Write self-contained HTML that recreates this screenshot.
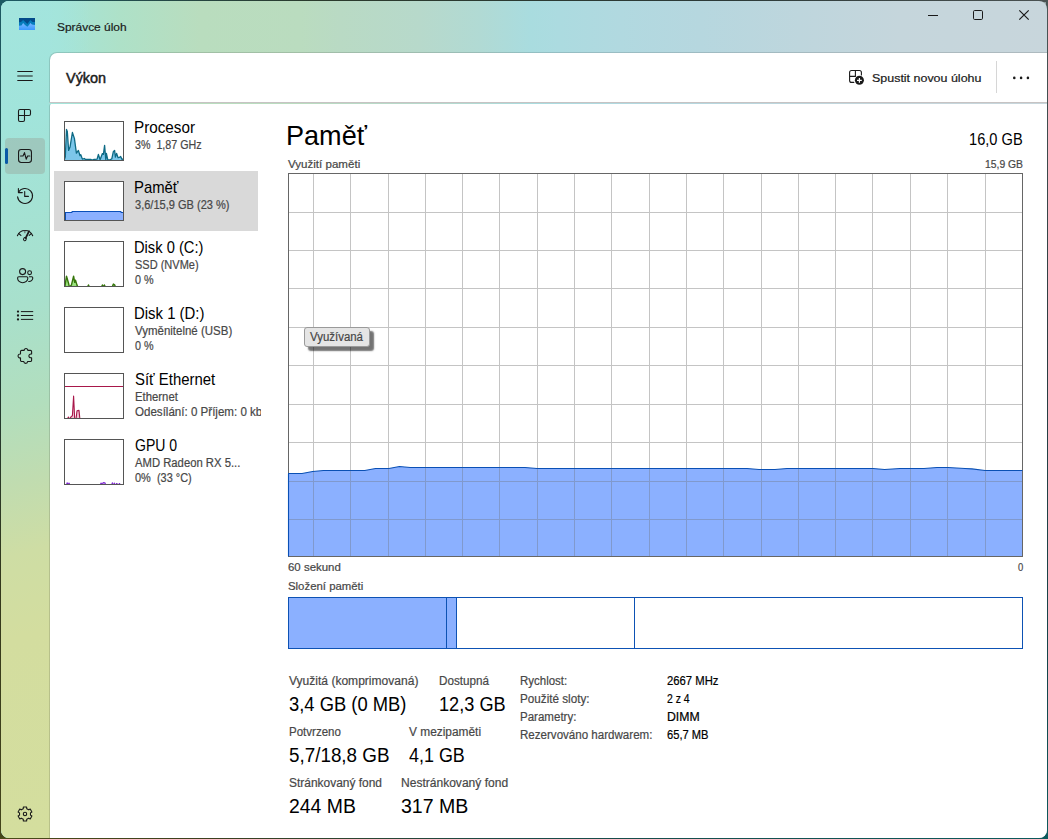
<!DOCTYPE html>
<html lang="cs">
<head>
<meta charset="utf-8">
<title>Správce úloh</title>
<style>
html,body{margin:0;padding:0}
body{width:1048px;height:839px;overflow:hidden;position:relative;font-family:"Liberation Sans",sans-serif;
background:linear-gradient(180deg,#1d5a64 0,#1a3a3a 35%,#33381c 70%,#44441a 100%)}
.corner-tr{position:absolute;left:1036px;top:0;width:12px;height:12px;background:#8e9c9c}
.corner-br{position:absolute;left:1036px;top:827px;width:12px;height:12px;background:#0c5a5c}
.edge-top{position:absolute;left:0;top:0;width:1048px;height:2px;background:linear-gradient(90deg,#1d5a64,#2a3a2c 30%,#2c3a38 70%,#4a5252)}
.edge-right{position:absolute;left:1046px;top:0;width:2px;height:839px;background:linear-gradient(180deg,#4a5555,#2c3c40 40%,#13444a 80%,#0c5a5c)}
.edge-bottom{position:absolute;left:0;top:837px;width:1048px;height:2px;background:linear-gradient(90deg,#4a4a18,#3c4020 20%,#1a4a48 50%,#0c5a5c)}
.win{position:absolute;left:1px;top:1px;width:1046px;height:837px;border-radius:8px;overflow:hidden}
.o{position:absolute;left:-1px;top:-1px;width:1048px;height:839px;
background:
 linear-gradient(90deg,rgba(163,229,222,1) 0,rgba(163,229,222,1) 30px,rgba(163,229,222,0) 90px),
 linear-gradient(90deg,#a3e5de 0,#a5e4d8 60px,#aee1c8 120px,#b9ddbe 200px,#badcbf 300px,#b9dac4 340px,#b7d9cb 420px,#b1dad4 480px,#a9dcdf 530px,#acdbe0 560px,#b1d9e0 620px,#b6d7df 700px,#bed6dd 800px,#c5d6dc 900px,#c8d6dc 100%)}
.side{position:absolute;left:0;top:0;width:50px;height:839px;
background:linear-gradient(165deg,#a3e5de 0,#a1e4db 120px,#a8e0cc 300px,#b2debd 400px,#c0dcb0 470px,#cedda4 540px,#d3dd9f 620px,#d4de9e 100%)}
.hdr{position:absolute;left:49px;top:52px;width:999px;height:49px;background:#fff;border-top-left-radius:8px;border:1px solid rgba(0,0,0,.13);border-bottom-color:#c7c3c3;border-right:0;background-clip:padding-box}
.content{position:absolute;left:49px;top:104px;width:999px;height:735px;background:#fff;border-top-left-radius:2px;border-left:1px solid rgba(0,0,0,.13);background-clip:padding-box}
.t{position:absolute;white-space:nowrap;line-height:1;transform-origin:0 0}
.sel{position:absolute;left:54px;top:171px;width:204px;height:60px;background:#d9d9d9}
.thumb{position:absolute;left:64px;width:58px;border:1px solid #555;background:#fff;overflow:hidden}
.thumb svg{position:absolute;left:0;top:0}
.navsel{position:absolute;left:5px;top:138px;width:40px;height:36px;border-radius:4px;background:rgba(150,140,130,.3)}
.navind{position:absolute;left:5px;top:148px;width:3px;height:16px;border-radius:1.5px;background:#0a59a6}
.tip{position:absolute;left:304px;top:327px;width:64px;height:18px;border:1px solid #9a9a9a;border-radius:3px;background:#e5e5e5;box-shadow:4px 4px 1.5px rgba(0,0,0,.55)}
.vsep{position:absolute;left:996px;top:61px;width:1px;height:32px;background:#d6d6d6}
.comp{position:absolute;left:288px;top:597px;width:733px;height:50px;border:1px solid #0d52b4;background:#fff}
.comp i{position:absolute;top:0;height:50px;display:block}
.clip{position:absolute;left:0;top:0;width:261px;height:839px;overflow:hidden}
.ic{position:absolute;overflow:visible}
</style>
</head>
<body>
<div class="corner-tr"></div><div class="corner-br"></div><div class="edge-top"></div><div class="edge-right"></div><div class="edge-bottom"></div>
<div class="win"><div class="o">
<div class="side"></div>
<div class="hdr"></div>
<div class="content"></div>
<header>
<svg class="ic" style="left:19px;top:18px" width="16" height="12" viewBox="19 18 16 12" ><defs><linearGradient id="ag" x1="0" y1="0" x2="0" y2="1"><stop offset="0" stop-color="#78b8ff"/><stop offset="1" stop-color="#3a99ff"/></linearGradient></defs><rect x="19" y="18" width="16" height="12" fill="#034b8a"/><path d="M19 22.3L21 22L23.1 20.1L25 21.8L27.4 23.9L29 21.8L30.3 20.1L32.5 22L35 22V30H19Z" fill="#057cbc"/><path d="M19 25.7L21.5 25.5L23.1 23.1L25 25L27.4 26.8L29 25L30.3 23.1L32 24.6L35 24.9V30H19Z" fill="url(#ag)"/></svg>
<svg class="ic" style="left:920px;top:5px" width="120" height="22" viewBox="920 5 120 22" ><path d="M928 15.5H938" stroke="#1a1a1a" stroke-width="1" fill="none"/><rect x="973.5" y="10.5" width="9" height="9" rx="1.2" stroke="#1a1a1a" stroke-width="1" fill="none"/><path d="M1019.3 10.3L1028.7 19.7M1028.7 10.3L1019.3 19.7" stroke="#1a1a1a" stroke-width="1.2" fill="none"/></svg>
<span class="t" style="left:57.10px;top:22px;font-size:11.3px;color:#1b1b1b;-webkit-text-stroke:0.2px;transform:scaleX(1.0555);">Správce úloh</span>
<div class="vsep"></div>
<span class="t" style="left:66.00px;top:71px;font-size:14px;color:#1b1b1b;-webkit-text-stroke:0.45px;transform:scaleX(1.0308);">Výkon</span>
<svg class="ic" style="left:846px;top:68px" width="20" height="18" viewBox="846 68 20 18" ><path d="M861.4 74.9V72.5a2 2 0 0 0-2-2H851.6a2 2 0 0 0-2 2V80.4a2 2 0 0 0 2 2H853.8M855.4 70.5V76.4H849.6" stroke="#1a1a1a" stroke-width="1.1" fill="none" stroke-linecap="round" stroke-linejoin="round"/><circle cx="859.4" cy="80.3" r="4.5" fill="#1a1a1a"/><path d="M857 80.3H861.8M859.4 77.9V82.7" stroke="#fff" stroke-width="1.2" fill="none"/></svg>
<span class="t" style="left:872.10px;top:73px;font-size:11.3px;color:#1b1b1b;-webkit-text-stroke:0.2px;transform:scaleX(1.1026);">Spustit novou úlohu</span>
<svg class="ic" style="left:1010px;top:74px" width="24" height="8" viewBox="1010 74 24 8" ><circle cx="1014.3" cy="77.9" r="1.3" fill="#1a1a1a"/><circle cx="1021.1" cy="77.9" r="1.3" fill="#1a1a1a"/><circle cx="1027.9" cy="77.9" r="1.3" fill="#1a1a1a"/></svg>
</header>
<nav>
<div class="navsel"></div><div class="navind"></div>
<svg class="ic" style="left:15px;top:68px" width="20" height="16" viewBox="15 68 20 16" ><path d="M17.3 71.5H32.7M17.3 76H32.7M17.3 80.5H32.7" stroke="#1a1a1a" stroke-width="1" fill="none"/></svg>
<svg class="ic" style="left:16px;top:107px" width="18" height="18" viewBox="16 107 18 18" ><path d="M18.5 111a1.5 1.5 0 0 1 1.5-1.5H29a1.5 1.5 0 0 1 1.5 1.5V114a1.5 1.5 0 0 1-1.5 1.5H24.5V120a1.5 1.5 0 0 1-1.5 1.5H20a1.5 1.5 0 0 1-1.5-1.5ZM24.5 109.5V115.5M18.5 115.5H24.5" stroke="#1a1a1a" stroke-width="1.1" fill="none"/></svg>
<svg class="ic" style="left:16px;top:147px" width="18" height="18" viewBox="16 147 18 18" ><rect x="18.55" y="149.55" width="12.9" height="12.9" rx="2.6" stroke="#1a1a1a" stroke-width="1.1" fill="none"/><path d="M20.5 156H23L24.5 152.6L26.2 159.2L27.6 156H29.8" stroke="#1a1a1a" stroke-width="1.1" fill="none" stroke-linejoin="round" stroke-linecap="round"/></svg>
<svg class="ic" style="left:15px;top:186px" width="20" height="20" viewBox="15 186 20 20" ><path d="M18.5 192.3A7.5 7.5 0 1 1 17.6 196.9" stroke="#1a1a1a" stroke-width="1.1" fill="none" stroke-linecap="round"/><path d="M18.4 188.5V192.6H22.3" stroke="#1a1a1a" stroke-width="1.1" fill="none" stroke-linecap="round" stroke-linejoin="round"/><path d="M24.7 191.6V196.4H28.4" stroke="#1a1a1a" stroke-width="1.1" fill="none" stroke-linecap="round" stroke-linejoin="round"/></svg>
<svg class="ic" style="left:15px;top:227px" width="20" height="16" viewBox="15 227 20 16" ><path d="M17.4 235.7A8.2 8.2 0 0 1 32.7 235.7" stroke="#1a1a1a" stroke-width="1.1" fill="none" stroke-linecap="round"/><path d="M18.7 233.5L20.9 235.4M31.4 233.5L29.2 235.4" stroke="#1a1a1a" stroke-width="1.1" fill="none" stroke-linecap="round"/><path d="M24.9 230.6V233.2" stroke="#555" stroke-width="1" fill="none"/><path d="M29.1 231.2L25.7 238" stroke="#1a1a1a" stroke-width="1.7" fill="none" stroke-linecap="round"/><ellipse cx="24.9" cy="239.2" rx="1.3" ry="1.6" transform="rotate(28 24.9 239.2)" stroke="#1a1a1a" stroke-width="1" fill="none"/></svg>
<svg class="ic" style="left:15px;top:266px" width="20" height="19" viewBox="15 266 20 19" ><circle cx="22.6" cy="271.6" r="3" stroke="#1a1a1a" stroke-width="1.1" fill="none"/><circle cx="29.6" cy="272.7" r="1.9" stroke="#1a1a1a" stroke-width="1.1" fill="none"/><path d="M18.8 276.8H26.6a1.2 1.2 0 0 1 1.2 1.2V278.3A5.1 4.4 0 0 1 17.6 278.3V278a1.2 1.2 0 0 1 1.2-1.2Z" stroke="#1a1a1a" stroke-width="1.1" fill="none" stroke-linejoin="round"/><path d="M29.4 276.8H31.7a1.1 1.1 0 0 1 1.1 1.1V278.1A3.8 3.5 0 0 1 28.7 281.5" stroke="#1a1a1a" stroke-width="1.1" fill="none" stroke-linejoin="round" stroke-linecap="round"/></svg>
<svg class="ic" style="left:15px;top:308px" width="20" height="15" viewBox="15 308 20 15" ><path d="M21.3 311.6H32.8M21.3 315.5H32.8M21.3 319.4H32.8" stroke="#1a1a1a" stroke-width="1" fill="none" stroke-linecap="round"/><circle cx="18" cy="311.6" r="1.15" fill="#1a1a1a"/><circle cx="18" cy="315.5" r="1.15" fill="#1a1a1a"/><circle cx="18" cy="319.4" r="1.15" fill="#1a1a1a"/></svg>
<svg class="ic" style="left:16px;top:346px" width="18" height="20" viewBox="16 346 18 20" ><path d="M21.7 350.4H24.1A1.9 1.9 0 1 1 27.9 350.4H30.4a1.2 1.2 0 0 1 1.2 1.2V354H30.8A1.9 1.9 0 1 0 30.8 357.8H31.6V360.3a1.2 1.2 0 0 1-1.2 1.2H27.6A1.9 1.9 0 1 1 23.8 361.5H21.7a1.2 1.2 0 0 1-1.2-1.2V357.9A2 2 0 1 1 20.5 354V351.6a1.2 1.2 0 0 1 1.2-1.2Z" stroke="#1a1a1a" stroke-width="1.1" fill="none" stroke-linejoin="round"/></svg>
<svg class="ic" style="left:16px;top:805px" width="18" height="18" viewBox="16 805 18 18" ><path d="M23.36 806.99L26.64 806.99L26.73 808.67L28.75 809.84L30.25 809.07L31.89 811.92L30.48 812.84L30.48 815.16L31.89 816.08L30.25 818.93L28.75 818.16L26.73 819.33L26.64 821.01L23.36 821.01L23.27 819.33L21.25 818.16L19.75 818.93L18.11 816.08L19.52 815.16L19.52 812.84L18.11 811.92L19.75 809.07L21.25 809.84L23.27 808.67Z" stroke="#1a1a1a" stroke-width="1.1" fill="none" stroke-linejoin="round"/><circle cx="25" cy="814" r="1.7" stroke="#1a1a1a" stroke-width="1.1" fill="none"/></svg>
</nav>
<aside>
<div class="sel"></div>
<div class="thumb" style="top:121px;height:38px"><svg width="58" height="38" viewBox="0 0 58 38"><path d="M-0.7 37.8 L0.3 35.1 L1.5 7.4 L2.3 9.4 L3.6 28.4 L5.0 25.1 L7.4 10.5 L9.4 16.4 L11.4 31.1 L13.4 28.4 L15.0 33.7 L15.8 32.7 L17.4 37.1 L19.4 36.5 L20.4 37.4 L25.7 37.4 L27.1 38.1 L29.1 37.4 L32.1 37.2 L33.4 32.5 L35.1 37.8 L37.4 31.6 L38.4 32.4 L39.6 23.4 L40.8 37.8 L41.4 31.4 L42.8 37.8 L45.1 37.8 L46.8 36.8 L48.4 29.4 L49.6 28.4 L50.4 35.1 L51.6 31.4 L53.1 35.7 L54.5 35.4 L55.5 34.4 L57.1 37.4 L58.5 37.1 L58.5 38 L-0.7 38Z" fill="#7cc6ea"/><path d="M-0.7 37.8 L0.3 35.1 L1.5 7.4 L2.3 9.4 L3.6 28.4 L5.0 25.1 L7.4 10.5 L9.4 16.4 L11.4 31.1 L13.4 28.4 L15.0 33.7 L15.8 32.7 L17.4 37.1 L19.4 36.5 L20.4 37.4 L25.7 37.4 L27.1 38.1 L29.1 37.4 L32.1 37.2 L33.4 32.5 L35.1 37.8 L37.4 31.6 L38.4 32.4 L39.6 23.4 L40.8 37.8 L41.4 31.4 L42.8 37.8 L45.1 37.8 L46.8 36.8 L48.4 29.4 L49.6 28.4 L50.4 35.1 L51.6 31.4 L53.1 35.7 L54.5 35.4 L55.5 34.4 L57.1 37.4 L58.5 37.1" stroke="#0e6a85" stroke-width="1.3" fill="none" stroke-linejoin="round"/></svg></div>
<span class="t" style="left:134.03px;top:120px;font-size:15.7px;color:#000000;transform:scaleX(0.9716);">Procesor</span>
<span class="t" style="left:135.00px;top:139px;font-size:12px;color:#474747;-webkit-text-stroke:0.2px;transform:scaleX(0.8916);">3%  1,87 GHz</span>
<div class="thumb" style="top:181px;height:38px"><svg width="58" height="38" viewBox="0 0 58 38"><path d="M0.0 30.5 L6.5 30.5 L7.5 29.5 L55.5 29.5 L56.5 30.5 L58.0 30.5 L58.0 38 L0.0 38Z" fill="#8bb0ff"/><path d="M0.0 30.5 L6.5 30.5 L7.5 29.5 L55.5 29.5 L56.5 30.5 L58.0 30.5" stroke="#0a4fba" stroke-width="1.15" fill="none" stroke-linejoin="round"/><path d="M0.5 30.6V38" stroke="#0a50b5" stroke-width="1"/></svg></div>
<span class="t" style="left:134.05px;top:180px;font-size:15.7px;color:#000000;transform:scaleX(0.9472);">Paměť</span>
<span class="t" style="left:135.00px;top:199px;font-size:12px;color:#474747;-webkit-text-stroke:0.2px;transform:scaleX(0.9199);">3,6/15,9 GB (23 %)</span>
<div class="thumb" style="top:241px;height:44px"><svg width="58" height="44" viewBox="0 0 58 44"><path d="M-0.7 45.2 L-0.2 45.2 L1.5 34.1 L3.7 41.8 L4.4 45.2 L6.4 43.1 L8.6 34.1 L9.7 40.4 L10.5 38.1 L12.0 43.1 L13.0 45.2 L22.4 45.2 L23.5 43.0 L24.4 45.2 L36.4 45.2 L37.4 43.0 L38.4 45.2 L39.4 43.0 L40.4 45.2 L47.1 45.2 L48.4 42.1 L49.8 43.1 L50.4 45.2 L58.5 45.2 L58.5 44 L-0.7 44Z" fill="#9be27f"/><path d="M-0.7 45.2 L-0.2 45.2 L1.5 34.1 L3.7 41.8 L4.4 45.2 L6.4 43.1 L8.6 34.1 L9.7 40.4 L10.5 38.1 L12.0 43.1 L13.0 45.2 L22.4 45.2 L23.5 43.0 L24.4 45.2 L36.4 45.2 L37.4 43.0 L38.4 45.2 L39.4 43.0 L40.4 45.2 L47.1 45.2 L48.4 42.1 L49.8 43.1 L50.4 45.2 L58.5 45.2" stroke="#35750a" stroke-width="1.4" fill="none" stroke-linejoin="round"/></svg></div>
<span class="t" style="left:134.06px;top:240px;font-size:15.7px;color:#000000;transform:scaleX(0.9361);">Disk 0 (C:)</span>
<span class="t" style="left:135.00px;top:259px;font-size:12px;color:#474747;-webkit-text-stroke:0.2px;transform:scaleX(0.9172);">SSD (NVMe)</span>
<span class="t" style="left:135.00px;top:274px;font-size:12px;color:#474747;-webkit-text-stroke:0.2px;transform:scaleX(0.8997);">0 %</span>
<div class="thumb" style="top:307px;height:44px"><svg width="58" height="44" viewBox="0 0 58 44"></svg></div>
<span class="t" style="left:134.05px;top:306px;font-size:15.7px;color:#000000;transform:scaleX(0.9512);">Disk 1 (D:)</span>
<span class="t" style="left:135.00px;top:325px;font-size:12px;color:#474747;-webkit-text-stroke:0.2px;transform:scaleX(0.9568);">Vyměnitelné (USB)</span>
<span class="t" style="left:135.00px;top:340px;font-size:12px;color:#474747;-webkit-text-stroke:0.2px;transform:scaleX(0.8997);">0 %</span>
<div class="thumb" style="top:373px;height:44px"><svg width="58" height="44" viewBox="0 0 58 44"><path d="M-0.7 45.2 L2.3 45.2 L3.4 43.1 L4.4 45.2 L6.4 42.4 L7.4 41.8 L8.6 22.1 L9.7 45.2 L11.0 45.2 L12.0 36.8 L14.0 36.4 L14.9 45.2 L58.5 45.2 L58.5 44 L-0.7 44Z" fill="#f3c3d3"/><path d="M-0.7 45.2 L2.3 45.2 L3.4 43.1 L4.4 45.2 L6.4 42.4 L7.4 41.8 L8.6 22.1 L9.7 45.2 L11.0 45.2 L12.0 36.8 L14.0 36.4 L14.9 45.2 L58.5 45.2" stroke="#a8174a" stroke-width="1.1" fill="none" stroke-linejoin="round"/><path d="M0 12.5H58" stroke="#a8174a" stroke-width="1" shape-rendering="crispEdges"/></svg></div>
<span class="t" style="left:135.00px;top:372px;font-size:15.7px;color:#000000;transform:scaleX(0.9505);">Síť Ethernet</span>
<span class="t" style="left:135.00px;top:391px;font-size:12px;color:#474747;-webkit-text-stroke:0.2px;transform:scaleX(0.9451);">Ethernet</span>
<div class="clip"><span class="t" style="left:135.00px;top:406px;font-size:12px;color:#474747;-webkit-text-stroke:0.2px;transform:scaleX(0.9637)">Odesílání: 0 Příjem: 0 kb/s</span></div>
<div class="thumb" style="top:439px;height:44px"><svg width="58" height="44" viewBox="0 0 58 44"><path d="M-0.7 45.2 L1.3 45.2 L2.2 42.6 L3.0 45.2 L4.0 42.8 L5.0 45.2 L6.0 45.2 L33.1 45.2 L34.1 45.2 L35.1 45.2 L36.1 42.8 L37.1 45.2 L38.1 42.3 L39.1 43.1 L39.9 42.4 L40.8 45.2 L46.4 45.2 L47.4 42.6 L48.4 45.2 L49.4 42.8 L50.4 45.2 L51.8 43.1 L53.1 45.2 L54.5 43.1 L55.5 45.2 L56.1 45.2 L58.5 45.2 L58.5 44 L-0.7 44Z" fill="#c9a5f0"/><path d="M-0.7 45.2 L1.3 45.2 L2.2 42.6 L3.0 45.2 L4.0 42.8 L5.0 45.2 L6.0 45.2 L33.1 45.2 L34.1 45.2 L35.1 45.2 L36.1 42.8 L37.1 45.2 L38.1 42.3 L39.1 43.1 L39.9 42.4 L40.8 45.2 L46.4 45.2 L47.4 42.6 L48.4 45.2 L49.4 42.8 L50.4 45.2 L51.8 43.1 L53.1 45.2 L54.5 43.1 L55.5 45.2 L56.1 45.2 L58.5 45.2" stroke="#7a1fd0" stroke-width="1" fill="none" stroke-linejoin="round"/></svg></div>
<span class="t" style="left:135.00px;top:438px;font-size:15.7px;color:#000000;transform:scaleX(0.8954);">GPU 0</span>
<span class="t" style="left:135.00px;top:457px;font-size:12px;color:#474747;-webkit-text-stroke:0.2px;transform:scaleX(0.9399);">AMD Radeon RX 5...</span>
<span class="t" style="left:135.00px;top:472px;font-size:12px;color:#474747;-webkit-text-stroke:0.2px;transform:scaleX(0.9122);">0%  (33 °C)</span>
</aside>
<main>
<svg class="ic" style="left:288px;top:173px" width="735" height="384" viewBox="288 173 735 384"><rect x="288" y="173" width="735" height="384" fill="#fff"/><path d="M313.5 173V557M350.5 173V557M388.5 173V557M425.5 173V557M462.5 173V557M499.5 173V557M537.5 173V557M574.5 173V557M611.5 173V557M649.5 173V557M686.5 173V557M723.5 173V557M761.5 173V557M798.5 173V557M835.5 173V557M872.5 173V557M910.5 173V557M947.5 173V557M985.5 173V557M288 212.5H1023M288 250.5H1023M288 288.5H1023M288 327.5H1023M288 365.5H1023M288 404.5H1023M288 442.5H1023M288 481.5H1023M288 519.5H1023" stroke="#c4c4c4" stroke-width="1" fill="none" shape-rendering="crispEdges"/><clipPath id="ca"><path d="M288.5 473.5 L302 473.5 L312.7 471.5 L323.4 470.5 L364.8 470.5 L375.5 468.5 L388.9 468.5 L399.5 466.5 L410.2 467.5 L525 467.5 L537 468.5 L747 468.5 L759 469.5 L775 469.5 L787 468.5 L873 468.5 L884.6 469.5 L900 468.5 L924 468.5 L937 467.5 L948 467.5 L965 468.5 L972 468.9 L985 470.5 L1022.5 470.5 L1022.5 557 L288.5 557Z"/></clipPath><path d="M288.5 473.5 L302 473.5 L312.7 471.5 L323.4 470.5 L364.8 470.5 L375.5 468.5 L388.9 468.5 L399.5 466.5 L410.2 467.5 L525 467.5 L537 468.5 L747 468.5 L759 469.5 L775 469.5 L787 468.5 L873 468.5 L884.6 469.5 L900 468.5 L924 468.5 L937 467.5 L948 467.5 L965 468.5 L972 468.9 L985 470.5 L1022.5 470.5 L1022.5 557 L288.5 557Z" fill="#8bb0ff"/><path d="M313.5 173V557M350.5 173V557M388.5 173V557M425.5 173V557M462.5 173V557M499.5 173V557M537.5 173V557M574.5 173V557M611.5 173V557M649.5 173V557M686.5 173V557M723.5 173V557M761.5 173V557M798.5 173V557M835.5 173V557M872.5 173V557M910.5 173V557M947.5 173V557M985.5 173V557M288 212.5H1023M288 250.5H1023M288 288.5H1023M288 327.5H1023M288 365.5H1023M288 404.5H1023M288 442.5H1023M288 481.5H1023M288 519.5H1023" stroke="#8099cd" stroke-width="1" fill="none" shape-rendering="crispEdges" clip-path="url(#ca)"/><rect x="288.5" y="173.5" width="734" height="383" fill="none" stroke="#666" stroke-width="1" shape-rendering="crispEdges"/><path d="M288.5 556.5L288.5 473.5 L302 473.5 L312.7 471.5 L323.4 470.5 L364.8 470.5 L375.5 468.5 L388.9 468.5 L399.5 466.5 L410.2 467.5 L525 467.5 L537 468.5 L747 468.5 L759 469.5 L775 469.5 L787 468.5 L873 468.5 L884.6 469.5 L900 468.5 L924 468.5 L937 467.5 L948 467.5 L965 468.5 L972 468.9 L985 470.5 L1022.5 470.5" stroke="#0a50b5" stroke-width="1.1" fill="none" stroke-linejoin="round"/></svg>
<div class="comp"><i style="left:0;width:157px;background:#8bb0ff;border-right:1px solid #0d52b4"></i><i style="left:158px;width:9px;background:#8bb0ff;border-right:1px solid #0d52b4"></i><i style="left:345px;width:1px;background:#0d52b4"></i></div>
<div class="tip"></div>
<span class="t" style="left:285.97px;top:122px;font-size:28px;color:#000000;transform:scaleX(0.9666);">Paměť</span>
<span class="t" style="left:969.47px;top:132px;font-size:15.7px;color:#000000;transform:scaleX(0.9324);">16,0 GB</span>
<span class="t" style="left:288.00px;top:159px;font-size:10.67px;color:#474747;-webkit-text-stroke:0.2px;transform:scaleX(1.0852);">Využití paměti</span>
<span class="t" style="left:984.80px;top:159px;font-size:10.67px;color:#474747;-webkit-text-stroke:0.2px;transform:scaleX(0.9721);">15,9 GB</span>
<span class="t" style="left:309.70px;top:331px;font-size:12px;color:#474747;-webkit-text-stroke:0.2px;transform:scaleX(0.9532);">Využívaná</span>
<span class="t" style="left:288.00px;top:562px;font-size:10.67px;color:#474747;-webkit-text-stroke:0.2px;transform:scaleX(1.0741);">60 sekund</span>
<span class="t" style="left:1017.50px;top:562px;font-size:10.67px;color:#474747;-webkit-text-stroke:0.2px;transform:scaleX(0.8833);">0</span>
<span class="t" style="left:288.00px;top:581px;font-size:10.67px;color:#474747;-webkit-text-stroke:0.2px;transform:scaleX(1.0682);">Složení paměti</span>
<span class="t" style="left:288.50px;top:675px;font-size:12px;color:#474747;-webkit-text-stroke:0.2px;transform:scaleX(1.0036);">Využitá (komprimovaná)</span>
<span class="t" style="left:438.50px;top:675px;font-size:12px;color:#474747;-webkit-text-stroke:0.2px;transform:scaleX(0.9730);">Dostupná</span>
<span class="t" style="left:288.50px;top:695px;font-size:19.4px;color:#000000;transform:scaleX(0.9477);">3,4 GB (0 MB)</span>
<span class="t" style="left:438.66px;top:695px;font-size:19.4px;color:#000000;transform:scaleX(0.9363);">12,3 GB</span>
<span class="t" style="left:288.50px;top:726px;font-size:12px;color:#474747;-webkit-text-stroke:0.2px;transform:scaleX(0.9603);">Potvrzeno</span>
<span class="t" style="left:409.40px;top:726px;font-size:12px;color:#474747;-webkit-text-stroke:0.2px;transform:scaleX(0.9913);">V mezipaměti</span>
<span class="t" style="left:288.50px;top:746px;font-size:19.4px;color:#000000;transform:scaleX(0.9712);">5,7/18,8 GB</span>
<span class="t" style="left:409.40px;top:746px;font-size:19.4px;color:#000000;transform:scaleX(0.9238);">4,1 GB</span>
<span class="t" style="left:288.50px;top:777px;font-size:12px;color:#474747;-webkit-text-stroke:0.2px;transform:scaleX(0.9955);">Stránkovaný fond</span>
<span class="t" style="left:401.40px;top:777px;font-size:12px;color:#474747;-webkit-text-stroke:0.2px;transform:scaleX(1.0033);">Nestránkovaný fond</span>
<span class="t" style="left:288.50px;top:797px;font-size:19.4px;color:#000000;transform:scaleX(1.0001);">244 MB</span>
<span class="t" style="left:401.40px;top:797px;font-size:19.4px;color:#000000;transform:scaleX(1.0077);">317 MB</span>
<span class="t" style="left:520.30px;top:675px;font-size:12px;color:#474747;-webkit-text-stroke:0.2px;transform:scaleX(0.9569);">Rychlost:</span>
<span class="t" style="left:520.30px;top:693px;font-size:12px;color:#474747;-webkit-text-stroke:0.2px;transform:scaleX(0.9742);">Použité sloty:</span>
<span class="t" style="left:520.30px;top:711px;font-size:12px;color:#474747;-webkit-text-stroke:0.2px;transform:scaleX(0.9615);">Parametry:</span>
<span class="t" style="left:520.30px;top:729px;font-size:12px;color:#474747;-webkit-text-stroke:0.2px;transform:scaleX(0.9638);">Rezervováno hardwarem:</span>
<span class="t" style="left:667.30px;top:675px;font-size:12px;color:#000000;-webkit-text-stroke:0.2px;transform:scaleX(0.9416);">2667 MHz</span>
<span class="t" style="left:667.30px;top:693px;font-size:12px;color:#000000;-webkit-text-stroke:0.2px;transform:scaleX(0.8693);">2 z 4</span>
<span class="t" style="left:667.30px;top:711px;font-size:12px;color:#000000;-webkit-text-stroke:0.2px;transform:scaleX(1.0220);">DIMM</span>
<span class="t" style="left:667.30px;top:729px;font-size:12px;color:#000000;-webkit-text-stroke:0.2px;transform:scaleX(0.9287);">65,7 MB</span>
</main>
</div></div>
</body>
</html>
